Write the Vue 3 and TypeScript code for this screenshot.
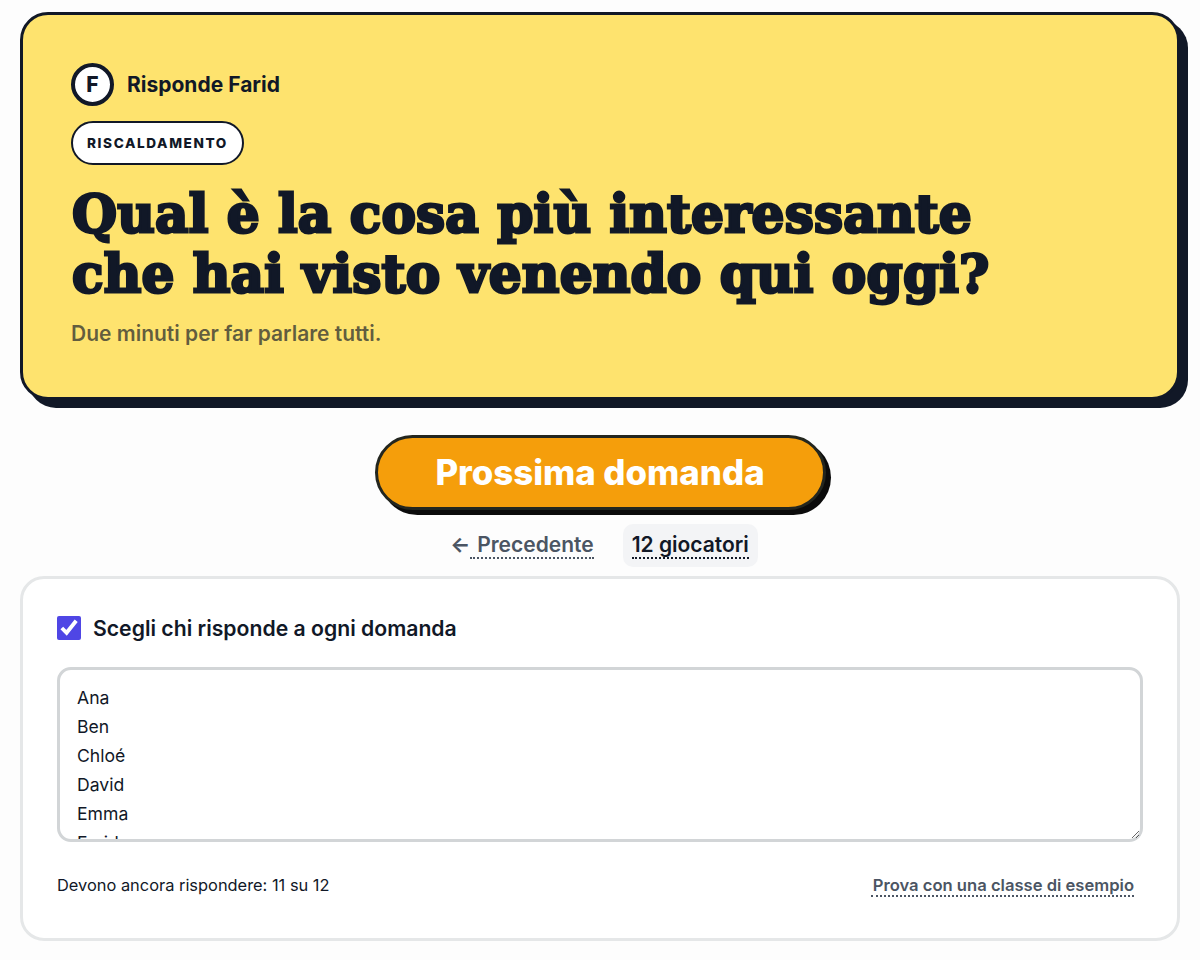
<script setup lang="ts">
const names: string = ['Ana', 'Ben', 'Chloé', 'David', 'Emma', 'Farid', 'Giulia', 'Hugo', 'Irene', 'Luca', 'Marta', 'Nico'].join('\n')
</script>

<template>
  <main class="page">
    <section class="hero">
      <div class="who">
        <span class="avatar">F</span>
        <span class="who-name">Risponde Farid</span>
      </div>
      <span class="badge">RISCALDAMENTO</span>
      <h1 class="question">Qual è la cosa più interessante<br />che hai visto venendo qui oggi?</h1>
      <p class="sub">Due minuti per far parlare tutti.</p>
    </section>

    <div class="actions">
      <button class="next" type="button">Prossima domanda</button>
      <div class="links">
        <a class="prev"><span class="arrow">←</span><span class="dotted prev-label">Precedente</span></a>
        <a class="players"><span class="dotted">12 giocatori</span></a>
      </div>
    </div>

    <section class="panel">
      <label class="check">
        <input type="checkbox" checked />
        <span>Scegli chi risponde a ogni domanda</span>
      </label>
      <textarea class="list" :value="names" spellcheck="false"></textarea>
      <div class="foot">
        <span class="remaining">Devono ancora rispondere: 11 su 12</span>
        <a class="sample">Prova con una classe di esempio</a>
      </div>
    </section>
  </main>
</template>

<style>
html, body { background: #fdfdfd; }
</style>

<style scoped>
.page {
  box-sizing: border-box;
  width: 1200px;
  height: 960px;
  padding: 12px 20px 0;
  font-family: Inter, "Liberation Sans", sans-serif;
  color: #111827;
  overflow: hidden;
}
.hero {
  box-sizing: border-box;
  height: 388px;
  padding: 48px 48px;
  background: #fee36e;
  border: 3px solid #111827;
  border-radius: 28px;
  box-shadow: 8px 8px 0 #111827;
  display: flex;
  flex-direction: column;
  align-items: flex-start;
}
.who {
  display: flex;
  align-items: center;
  gap: 13px;
  margin-bottom: 15px;
}
.avatar {
  box-sizing: border-box;
  width: 43px;
  height: 43px;
  border: 4px solid #111827;
  border-radius: 50%;
  background: #fff;
  display: flex;
  align-items: center;
  justify-content: center;
  font-size: 21px;
  font-weight: 800;
}
.who-name {
  font-size: 21px;
  font-weight: 700;
}
.badge {
  box-sizing: border-box;
  height: 47px;
  padding: 0 14px;
  display: flex;
  align-items: center;
  background: #fff;
  border: 2px solid #111827;
  border-radius: 24px;
  font-size: 13.6px;
  font-weight: 800;
  letter-spacing: 1.6px;
}
.question {
  margin: 19px 0 0 1px;
  font-family: "DejaVu Serif", "Liberation Serif", serif;
  font-size: 51.7px;
  line-height: 60px;
  font-weight: 700;
  -webkit-text-stroke: 2.8px #111827;
  letter-spacing: 0.2px;
  white-space: nowrap;
}
.sub {
  margin: 15px 0 0;
  font-size: 21px;
  line-height: 30px;
  font-weight: 600;
  color: rgba(17, 24, 39, 0.68);
}
.actions {
  display: flex;
  flex-direction: column;
  align-items: center;
}
.next {
  box-sizing: border-box;
  width: 451px;
  height: 75px;
  margin-top: 35px;
  padding: 0 0 1px;
  border: 3.5px solid #23261f;
  border-radius: 38px;
  background: #f59e0b;
  box-shadow: 5px 5px 0 #0b0b0b;
  color: #fff;
  font-family: inherit;
  font-size: 34.8px;
  font-weight: 800;
}
.links {
  display: flex;
  align-items: center;
  gap: 20px;
  margin-top: 14px;
  margin-left: -1px;
}
.prev, .players {
  font-size: 21px;
  font-weight: 600;
  line-height: 25px;
  padding: 8px 9px 10px;
}
.prev { color: #4b5563; }
.arrow { font-weight: 700; }
.prev-label { padding-left: 7px; }
.players {
  background: #f3f4f6;
  border-radius: 10px;
  color: #111827;
}
.dotted { border-bottom: 2px dotted currentColor; }
.panel {
  box-sizing: border-box;
  height: 365px;
  margin-top: 9px;
  padding: 37px 34px 34px;
  background: #fff;
  border: 3px solid #e5e7e8;
  border-radius: 24px;
}
.check {
  display: flex;
  align-items: center;
  gap: 12px;
  font-size: 21.2px;
  font-weight: 600;
  line-height: 24px;
}
.check input {
  width: 24px;
  height: 24px;
  margin: 0;
  accent-color: #4f46e5;
}
.list {
  box-sizing: border-box;
  display: block;
  width: 100%;
  height: 175px;
  margin-top: 27px;
  padding: 13px 17px;
  border: 3px solid #d2d5d7;
  border-radius: 14px;
  background: #fff;
  color: #111827;
  font-family: inherit;
  font-size: 17.6px;
  line-height: 29px;
  outline: none;
  overflow: hidden;
}
.foot {
  display: flex;
  justify-content: space-between;
  align-items: center;
  margin-top: 31px;
  line-height: 24px;
}
.remaining { font-size: 16.4px; }
.sample {
  margin-right: 9px;
  padding-left: 2px;
  padding-top: 1px;
  font-size: 16.6px;
  font-weight: 600;
  color: #4b5563;
  border-bottom: 2px dotted currentColor;
  line-height: 20px;
}
</style>
